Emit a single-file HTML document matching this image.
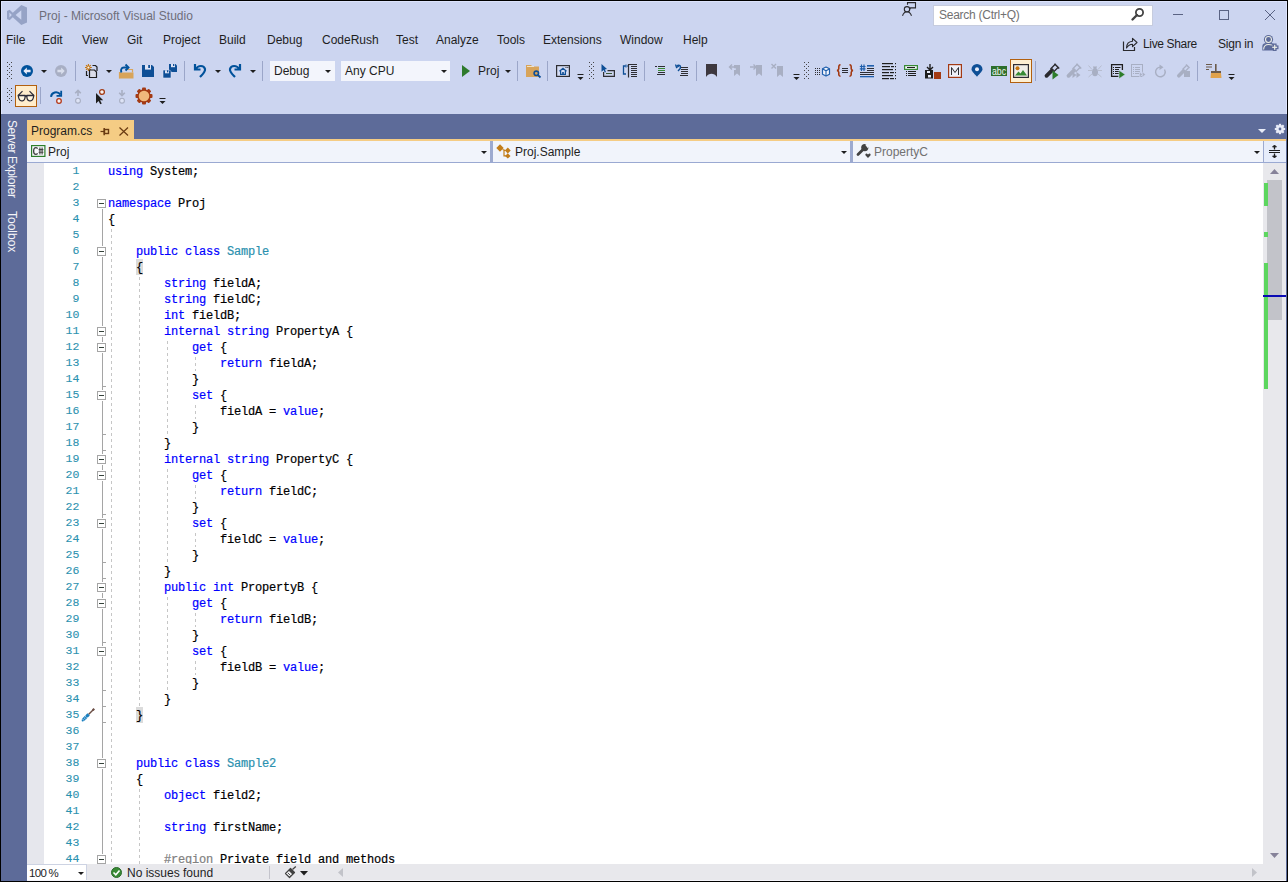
<!DOCTYPE html><html><head><meta charset="utf-8"><style>
*{margin:0;padding:0;box-sizing:border-box}
html,body{width:1288px;height:882px;overflow:hidden;background:#CCD5F0;font-family:"Liberation Sans",sans-serif;font-size:12px;color:#1E1E1E}
.a{position:absolute}
.t12{font-size:12px;line-height:14px;position:absolute;white-space:nowrap}
svg{position:absolute;overflow:visible}
.mono{font-family:"Liberation Mono",monospace;font-size:12px;letter-spacing:-0.2px;line-height:16px;-webkit-text-stroke:0.2px currentColor;white-space:pre;position:absolute}
.k{color:#0000FF}.ty{color:#2B91AF}.g{color:#808080}
</style></head><body>
<svg style="left:0px;top:0px" width="30" height="30" viewBox="0 0 30 30"><path d="M21.3 5 L27 7.6 V22.4 L21.3 25 L12.8 17.3 L9.6 20.3 L7 19 V11 L9.6 9.7 L12.8 12.7 Z M21.3 10.3 L15.6 15 L21.3 19.7 Z M9.4 12.6 V17.4 L11.8 15 Z" fill="#96A3C6" fill-rule="evenodd"/></svg>
<div class="t12" style="left:39px;top:9px;color:#6E6E7A;font-size:12px;">Proj - Microsoft Visual Studio</div>
<svg style="left:901px;top:1px" width="16" height="16" viewBox="0 0 16 16"><circle cx="6" cy="8.3" r="2.7" fill="none" stroke="#2A2A2E" stroke-width="1.1"/><path d="M1.5 14.7 C2.5 12 4 10.8 6 10.8 C8 10.8 9.5 12 10.5 14.7" fill="none" stroke="#2A2A2E" stroke-width="1.1"/><path d="M6.5 3.8 V1.6 H14.5 V6.9 H9.5 L8.5 8.5" fill="none" stroke="#2A2A2E" stroke-width="1.1"/></svg>
<div class="a" style="left:933px;top:5px;width:220px;height:21px;background:#FFFFFF;border:1px solid #C6CCDE"></div>
<div class="t12" style="left:939px;top:8px;color:#717171;font-size:12px;letter-spacing:-0.25px">Search (Ctrl+Q)</div>
<svg style="left:1131px;top:7px" width="14" height="14" viewBox="0 0 14 14"><circle cx="8.5" cy="5.5" r="3.6" fill="none" stroke="#424242" stroke-width="1.8"/><path d="M6 8 L1.5 12.5" stroke="#424242" stroke-width="2.4" stroke-linecap="round"/></svg>
<div class="a" style="left:1173px;top:14px;width:10px;height:1px;background:#5A6383;"></div>
<div class="a" style="left:1219px;top:10px;width:10px;height:10px;background:transparent;border:1px solid #5A6383"></div>
<svg style="left:1264px;top:9px" width="12" height="12" viewBox="0 0 12 12"><path d="M1 1 L11 11 M11 1 L1 11" stroke="#5A6383" stroke-width="1"/></svg>
<div class="t12" style="left:6px;top:33px;color:#1E1E1E;font-size:12px;">File</div>
<div class="t12" style="left:42px;top:33px;color:#1E1E1E;font-size:12px;">Edit</div>
<div class="t12" style="left:82px;top:33px;color:#1E1E1E;font-size:12px;">View</div>
<div class="t12" style="left:127px;top:33px;color:#1E1E1E;font-size:12px;">Git</div>
<div class="t12" style="left:163px;top:33px;color:#1E1E1E;font-size:12px;">Project</div>
<div class="t12" style="left:219px;top:33px;color:#1E1E1E;font-size:12px;">Build</div>
<div class="t12" style="left:267px;top:33px;color:#1E1E1E;font-size:12px;">Debug</div>
<div class="t12" style="left:322px;top:33px;color:#1E1E1E;font-size:12px;">CodeRush</div>
<div class="t12" style="left:396px;top:33px;color:#1E1E1E;font-size:12px;">Test</div>
<div class="t12" style="left:436px;top:33px;color:#1E1E1E;font-size:12px;">Analyze</div>
<div class="t12" style="left:497px;top:33px;color:#1E1E1E;font-size:12px;">Tools</div>
<div class="t12" style="left:543px;top:33px;color:#1E1E1E;font-size:12px;">Extensions</div>
<div class="t12" style="left:620px;top:33px;color:#1E1E1E;font-size:12px;">Window</div>
<div class="t12" style="left:683px;top:33px;color:#1E1E1E;font-size:12px;">Help</div>
<svg style="left:1120px;top:36px" width="20" height="17" viewBox="0 0 20 17"><path d="M3.5 5.5 V14.5 H14.5 V11" fill="none" stroke="#2A2A2E" stroke-width="1.2"/><path d="M6.5 12 C6.5 8 9 5.5 12.5 5.2 V2.3 L17 6.5 L12.5 10.7 V8.2 C10 8.2 8 9.5 6.5 12 Z" fill="none" stroke="#2A2A2E" stroke-width="1.1" stroke-linejoin="round"/></svg>
<div class="t12" style="left:1143px;top:37px;color:#1E1E1E;font-size:12px;letter-spacing:-0.35px">Live Share</div>
<div class="t12" style="left:1218px;top:37px;color:#1E1E1E;font-size:12px;letter-spacing:-0.2px">Sign in</div>
<svg style="left:1262px;top:34px" width="17" height="17" viewBox="0 0 17 17"><circle cx="6.5" cy="5.5" r="4.6" fill="#5D6B99"/><path d="M0.3 16.5 V12.5 C0.3 9.5 3 8.8 6.5 8.8 C10 8.8 12.7 9.5 12.7 12.5 V16.5 Z" fill="#5D6B99"/><circle cx="6.5" cy="5.5" r="3" fill="#5D6B99" stroke="#ECEEE6" stroke-width="1.1"/><path d="M1.6 15.5 C1.8 12 3.5 10.5 6.5 10.5 C9 10.5 10.5 11.5 11.2 12.8" fill="none" stroke="#ECEEE6" stroke-width="1.1"/><rect x="10.8" y="9.5" width="3.8" height="7.5" fill="#5D6B99"/><rect x="8.9" y="11.4" width="7.6" height="3.8" fill="#5D6B99"/><rect x="12.1" y="10.8" width="1.2" height="5" fill="#ECEEE6"/><rect x="10.2" y="12.7" width="5" height="1.2" fill="#ECEEE6"/></svg>
<svg style="left:7px;top:62px" width="6" height="18" viewBox="0 0 6 18"><g fill="#464646"><rect x="0" y="0" width="1" height="1"/><rect x="4" y="0" width="1" height="1"/><rect x="2" y="2" width="1" height="1"/><rect x="0" y="4" width="1" height="1"/><rect x="4" y="4" width="1" height="1"/><rect x="2" y="6" width="1" height="1"/><rect x="0" y="8" width="1" height="1"/><rect x="4" y="8" width="1" height="1"/><rect x="2" y="10" width="1" height="1"/><rect x="0" y="12" width="1" height="1"/><rect x="4" y="12" width="1" height="1"/><rect x="2" y="14" width="1" height="1"/><rect x="0" y="16" width="1" height="1"/><rect x="4" y="16" width="1" height="1"/></g></svg>
<svg style="left:21px;top:65px" width="12" height="12" viewBox="0 0 12 12"><circle cx="6" cy="6" r="6" fill="#00529B"/><path d="M2.3 6 L5.8 2.6 V4.8 H9.6 V7.2 H5.8 V9.4 Z" fill="#E8EBF8"/></svg>
<svg style="left:41px;top:70px" width="6" height="4" viewBox="0 0 6 4"><path d="M0 0 H6 L3 3 Z" fill="#1E1E1E"/></svg>
<svg style="left:55px;top:65px" width="12" height="12" viewBox="0 0 12 12"><circle cx="6" cy="6" r="6" fill="#A8AFC4"/><path d="M9.7 6 L6.2 2.6 V4.8 H2.4 V7.2 H6.2 V9.4 Z" fill="#D9DEEC"/></svg>
<div class="a" style="left:75px;top:61px;width:1px;height:20px;background:#9BA6C9;"></div>
<svg style="left:84px;top:63px" width="15" height="17" viewBox="0 0 15 17"><path d="M4.4 1 V8 M1 4.5 H7.8 M2 2.1 L6.8 6.9 M6.8 2.1 L2 6.9" stroke="#C6750E" stroke-width="1.1"/><circle cx="4.4" cy="4.5" r="1.5" fill="#F2F2F2" stroke="#C6750E" stroke-width="1"/><path d="M8.5 2.5 H11.5 L13 4 V8" fill="none" stroke="#1E1E1E" stroke-width="1.2"/><path d="M5.5 7 H10.5 L12.5 9 V14.5 H5.5 Z" fill="#DADCE8" stroke="#1E1E1E" stroke-width="1.2"/><path d="M2.5 8 V12.5 H4" fill="none" stroke="#1E1E1E" stroke-width="1.2"/></svg>
<svg style="left:106px;top:70px" width="6" height="4" viewBox="0 0 6 4"><path d="M0 0 H6 L3 3 Z" fill="#1E1E1E"/></svg>
<svg style="left:118px;top:63px" width="16" height="17" viewBox="0 0 16 17"><path d="M9 6.5 H14.5 V9.5" fill="none" stroke="#D9A55C" stroke-width="1.2"/><path d="M1.5 9.5 H15.5 V15.5 H1.5 Z" fill="#D8A45A"/><path d="M1.5 9 V15.5" stroke="#D8A45A" stroke-width="1.2"/><path d="M3.5 9.5 C2.5 7.5 3 4.5 6 4.5 H9" fill="none" stroke="#00529B" stroke-width="1.9"/><path d="M7.5 1.5 L10.5 4.5 L7.5 7.5" fill="none" stroke="#00529B" stroke-width="1.9"/></svg>
<svg style="left:142px;top:65px" width="12" height="12" viewBox="0 0 12 12"><path d="M0 0 H10 L12 2 V12 H0 Z" fill="#0E4F96"/><rect x="3" y="0" width="6" height="4.6" fill="#DDE3F5"/><rect x="6.2" y="0" width="1.8" height="3" fill="#0E4F96"/></svg>
<svg style="left:163px;top:64px" width="14" height="14" viewBox="0 0 14 14"><path d="M6 0 H12.5 L14 1.5 V8 H6 Z" fill="#0E4F96"/><rect x="8" y="0" width="4" height="3.2" fill="#DDE3F5"/><rect x="10" y="0" width="1.3" height="2" fill="#0E4F96"/><path d="M0 6 H6.5 L8 7.5 V14 H0 Z" fill="#0E4F96" stroke="#DDE3F5" stroke-width="0.6"/><rect x="2" y="6.3" width="4" height="3" fill="#DDE3F5"/><rect x="4" y="6.3" width="1.3" height="2" fill="#0E4F96"/></svg>
<div class="a" style="left:184px;top:61px;width:1px;height:20px;background:#9BA6C9;"></div>
<svg style="left:193px;top:62px" width="14" height="16" viewBox="0 0 14 16"><path d="M2 2 V7.5 H7.5" fill="none" stroke="#00529B" stroke-width="2.2"/><path d="M3 7 C5 3 11 3 12 7 C12.5 10 10 12 7 15" fill="none" stroke="#00529B" stroke-width="2.2"/></svg>
<svg style="left:215px;top:70px" width="6" height="4" viewBox="0 0 6 4"><path d="M0 0 H6 L3 3 Z" fill="#1E1E1E"/></svg>
<svg style="left:228px;top:62px" width="14" height="16" viewBox="0 0 14 16"><path d="M12 2 V7.5 H6.5" fill="none" stroke="#00529B" stroke-width="2.2"/><path d="M11 7 C9 3 3 3 2 7 C1.5 10 4 12 7 15" fill="none" stroke="#00529B" stroke-width="2.2"/></svg>
<svg style="left:250px;top:70px" width="6" height="4" viewBox="0 0 6 4"><path d="M0 0 H6 L3 3 Z" fill="#1E1E1E"/></svg>
<div class="a" style="left:262px;top:61px;width:1px;height:20px;background:#9BA6C9;"></div>
<div class="a" style="left:270px;top:61px;width:65px;height:20px;background:#F3F5FC;"></div>
<div class="t12" style="left:274px;top:64px;color:#1E1E1E;font-size:12px;">Debug</div>
<svg style="left:325px;top:70px" width="6" height="4" viewBox="0 0 6 4"><path d="M0 0 H6 L3 3 Z" fill="#1E1E1E"/></svg>
<div class="a" style="left:341px;top:61px;width:109px;height:20px;background:#F3F5FC;"></div>
<div class="t12" style="left:345px;top:64px;color:#1E1E1E;font-size:12px;">Any CPU</div>
<svg style="left:441px;top:70px" width="6" height="4" viewBox="0 0 6 4"><path d="M0 0 H6 L3 3 Z" fill="#1E1E1E"/></svg>
<svg style="left:462px;top:65px" width="9" height="12" viewBox="0 0 9 12"><path d="M0 0 L8 6 L0 12 Z" fill="#2E7A2C"/></svg>
<div class="t12" style="left:478px;top:64px;color:#1E1E1E;font-size:12px;">Proj</div>
<svg style="left:505px;top:70px" width="6" height="4" viewBox="0 0 6 4"><path d="M0 0 H6 L3 3 Z" fill="#1E1E1E"/></svg>
<div class="a" style="left:517px;top:61px;width:1px;height:20px;background:#9BA6C9;"></div>
<svg style="left:526px;top:65px" width="15" height="13" viewBox="0 0 15 13"><path d="M0 0 H5 L6.5 1.5 H13 V12 H0 Z" fill="#D8A45A"/><rect x="1" y="1" width="7" height="1" fill="#F0E2C8"/><circle cx="10.3" cy="8.3" r="2.2" fill="#D8A45A" stroke="#0E4F96" stroke-width="1.6"/><path d="M11.8 9.8 L14.5 12.5" stroke="#0E4F96" stroke-width="1.8"/></svg>
<div class="a" style="left:547px;top:61px;width:1px;height:20px;background:#9BA6C9;"></div>
<svg style="left:556px;top:65px" width="14" height="12" viewBox="0 0 14 12"><rect x="0.6" y="0.6" width="12.8" height="10.8" fill="#D4DCF4" stroke="#2E2E33" stroke-width="1.2"/><path d="M3.5 6.3 L7 3.2 L10.5 6.3 M4.6 5.6 V9.3 H9.4 V5.6" fill="none" stroke="#0E4F96" stroke-width="1.2"/><rect x="6.2" y="7" width="1.6" height="2.3" fill="#0E4F96"/><rect x="9.5" y="2" width="1" height="1" fill="#2E2E33"/><rect x="11.3" y="2" width="1" height="1" fill="#2E2E33"/></svg>
<svg style="left:577px;top:74px" width="7" height="7" viewBox="0 0 7 7"><rect x="0.5" y="0" width="6" height="1" fill="#1E1E1E"/><path d="M0.5 3 H6.5 L3.5 6 Z" fill="#1E1E1E"/></svg>
<svg style="left:589px;top:62px" width="6" height="18" viewBox="0 0 6 18"><g fill="#464646"><rect x="0" y="0" width="1" height="1"/><rect x="4" y="0" width="1" height="1"/><rect x="2" y="2" width="1" height="1"/><rect x="0" y="4" width="1" height="1"/><rect x="4" y="4" width="1" height="1"/><rect x="2" y="6" width="1" height="1"/><rect x="0" y="8" width="1" height="1"/><rect x="4" y="8" width="1" height="1"/><rect x="2" y="10" width="1" height="1"/><rect x="0" y="12" width="1" height="1"/><rect x="4" y="12" width="1" height="1"/><rect x="2" y="14" width="1" height="1"/><rect x="0" y="16" width="1" height="1"/><rect x="4" y="16" width="1" height="1"/></g></svg>
<svg style="left:601px;top:64px" width="15" height="14" viewBox="0 0 15 14"><path d="M0.5 0 L6 5 L3.8 5.4 L5 8 L3.8 8.6 L2.6 6 L0.5 7.8 Z" fill="#0E4F96"/><path d="M2.6 8 V12.4 H13.4 V6.6 H6.5" fill="none" stroke="#2E2E33" stroke-width="1.2"/><rect x="5" y="9" width="6" height="1" fill="#3B5A3B"/></svg>
<svg style="left:622px;top:63px" width="16" height="15" viewBox="0 0 16 15"><path d="M4 3 H1.5 V11 H4" fill="none" stroke="#0E4F96" stroke-width="1.3"/><path d="M4 1.5 L5.5 3 L4 4.5" fill="none" stroke="#0E4F96" stroke-width="1"/><path d="M6.5 1 V14.5" stroke="#2E2E33" stroke-width="1.2"/><g fill="#2E2E33"><rect x="6" y="1" width="9" height="1"/><rect x="9" y="3" width="6" height="1"/><rect x="9" y="5" width="6" height="1"/><rect x="9" y="7" width="6" height="1"/><rect x="9" y="9" width="6" height="1"/><rect x="9" y="11" width="6" height="1"/><rect x="9" y="13" width="6" height="1"/></g></svg>
<div class="a" style="left:644px;top:61px;width:1px;height:20px;background:#9BA6C9;"></div>
<svg style="left:654px;top:65px" width="12" height="11" viewBox="0 0 12 11"><g fill="#2E2E33"><rect x="1" y="1" width="2" height="1"/><rect x="4" y="1" width="7" height="1"/><rect x="4" y="7" width="7" height="1"/><rect x="3" y="9" width="8" height="1"/></g><g fill="#388A34"><rect x="4" y="3" width="7" height="1"/><rect x="4" y="5" width="7" height="1"/></g></svg>
<svg style="left:675px;top:64px" width="14" height="13" viewBox="0 0 14 13"><path d="M1.5 2.5 C2 1 5 0.5 5.5 2.5 C6 4.5 4 6 3 7" fill="none" stroke="#0E4F96" stroke-width="1.4"/><path d="M0.5 0.5 L1.5 3.5 L4 2" fill="none" stroke="#0E4F96" stroke-width="1.2"/><g fill="#2E2E33"><rect x="6" y="3" width="7" height="1"/><rect x="6" y="5" width="7" height="1"/><rect x="6" y="7" width="7" height="1"/><rect x="6" y="9" width="7" height="1"/><rect x="5" y="11" width="8" height="1"/></g></svg>
<div class="a" style="left:696px;top:61px;width:1px;height:20px;background:#9BA6C9;"></div>
<svg style="left:706px;top:64px" width="11" height="13" viewBox="0 0 11 13"><path d="M0 0 H11 V13 C9.5 10.5 7.5 9.8 5.5 9.8 C3.5 9.8 1.5 10.5 0 13 Z" fill="#3D383F"/></svg>
<svg style="left:728px;top:63px" width="13" height="14" viewBox="0 0 13 14"><path d="M6 2 H12 V13 L9 10.5 L6 13 Z" fill="#A8AFC3"/><path d="M1.5 4 H7 M4 1.5 L1.5 4 L4 6.5" fill="none" stroke="#A8AFC3" stroke-width="1.4"/><path d="M6 5.2 H7.8 V7 H6 Z" fill="#CCD5F0"/></svg>
<svg style="left:749px;top:63px" width="14" height="14" viewBox="0 0 14 14"><path d="M7 2 H13 V13 L10 10.5 L7 13 Z" fill="#A8AFC3"/><path d="M1 4 H7 M4.5 1.5 L7 4 L4.5 6.5" fill="none" stroke="#A8AFC3" stroke-width="1.4"/></svg>
<svg style="left:770px;top:63px" width="14" height="15" viewBox="0 0 14 15"><path d="M7 3 H13 V14 L10 11.5 L7 14 Z" fill="#A8AFC3"/><path d="M1.5 1 L6 5.5 M6 1 L1.5 5.5" stroke="#A8AFC3" stroke-width="1.4"/></svg>
<svg style="left:793px;top:74px" width="7" height="7" viewBox="0 0 7 7"><rect x="0.5" y="0" width="6" height="1" fill="#1E1E1E"/><path d="M0.5 3 H6.5 L3.5 6 Z" fill="#1E1E1E"/></svg>
<svg style="left:804px;top:62px" width="6" height="18" viewBox="0 0 6 18"><g fill="#464646"><rect x="0" y="0" width="1" height="1"/><rect x="4" y="0" width="1" height="1"/><rect x="2" y="2" width="1" height="1"/><rect x="0" y="4" width="1" height="1"/><rect x="4" y="4" width="1" height="1"/><rect x="2" y="6" width="1" height="1"/><rect x="0" y="8" width="1" height="1"/><rect x="4" y="8" width="1" height="1"/><rect x="2" y="10" width="1" height="1"/><rect x="0" y="12" width="1" height="1"/><rect x="4" y="12" width="1" height="1"/><rect x="2" y="14" width="1" height="1"/><rect x="0" y="16" width="1" height="1"/><rect x="4" y="16" width="1" height="1"/></g></svg>
<svg style="left:814px;top:66px" width="17" height="11" viewBox="0 0 17 11"><g fill="#2E2E33"><rect x="1" y="2" width="1" height="1"/><rect x="3" y="2" width="1" height="1"/><rect x="5" y="2" width="1" height="1"/><rect x="1" y="4" width="1" height="1"/><rect x="3" y="4" width="1" height="1"/><rect x="5" y="4" width="1" height="1"/><rect x="1" y="6" width="1" height="1"/><rect x="3" y="6" width="1" height="1"/><rect x="5" y="6" width="1" height="1"/><rect x="1" y="8" width="1" height="1"/><rect x="3" y="8" width="1" height="1"/><rect x="5" y="8" width="1" height="1"/></g><path d="M12 1 L15.5 2.8 V8.2 L12 10 L8.5 8.2 V2.8 Z" fill="#F4F6FC" stroke="#1F5FAD" stroke-width="1.2" stroke-linejoin="round"/><path d="M8.8 3 L12 4.8 L15.2 3 M12 4.8 V9.8" fill="none" stroke="#1F5FAD" stroke-width="1.1"/></svg>
<svg style="left:836px;top:64px" width="18" height="13" viewBox="0 0 18 13"><path d="M4.5 0.8 C2.5 0.8 2.8 2.5 2.8 4.5 C2.8 5.5 2.3 6.3 1 6.5 C2.3 6.7 2.8 7.5 2.8 8.5 C2.8 10.5 2.5 12.2 4.5 12.2 M13.5 0.8 C15.5 0.8 15.2 2.5 15.2 4.5 C15.2 5.5 15.7 6.3 17 6.5 C15.7 6.7 15.2 7.5 15.2 8.5 C15.2 10.5 15.5 12.2 13.5 12.2" fill="none" stroke="#A33A14" stroke-width="1.6"/><g fill="#2E2E33"><rect x="6" y="4" width="6" height="1"/><rect x="6" y="6" width="6" height="1"/><rect x="6" y="8" width="6" height="1"/></g></svg>
<svg style="left:859px;top:64px" width="15" height="14" viewBox="0 0 15 14"><path d="M2.5 0.5 V7 M5 0.5 V7 M0.8 2.5 H6.5 M0.8 4.8 H6.5" stroke="#1F5FAD" stroke-width="1.2"/><rect x="8" y="1" width="7" height="1.6" fill="#1F5FAD"/><rect x="8" y="4" width="7" height="1" fill="#2E2E33"/><rect x="8" y="6" width="7" height="1" fill="#2E2E33"/><rect x="1" y="8" width="14" height="1" fill="#2E2E33"/><rect x="1" y="10" width="14" height="1" fill="#2E2E33"/><rect x="1" y="12" width="14" height="1.3" fill="#1F5FAD"/></svg>
<svg style="left:881px;top:63px" width="16" height="17" viewBox="0 0 16 17"><g fill="#1E1E1E"><rect x="1" y="0" width="11" height="1.2"/><rect x="1" y="3" width="8" height="1.2"/><rect x="10" y="3" width="3" height="1.2"/><rect x="1" y="6" width="11" height="1.2"/><rect x="1" y="9" width="7" height="1.2"/><rect x="9" y="9" width="4" height="1.2"/><rect x="1" y="12" width="11" height="1.2"/><rect x="1" y="15" width="7" height="1.2"/><rect x="9" y="15" width="4" height="1.2"/><rect x="14" y="0" width="1" height="1.2"/><rect x="14" y="3" width="1" height="1.2"/><rect x="14" y="6" width="1" height="1.2"/><rect x="14" y="9" width="1" height="1.2"/><rect x="14" y="12" width="1" height="1.2"/><rect x="14" y="15" width="1" height="1.2"/></g></svg>
<svg style="left:904px;top:65px" width="14" height="12" viewBox="0 0 14 12"><rect x="0.6" y="0.6" width="12.8" height="3.8" fill="#F4F6FC" stroke="#388A34" stroke-width="1.2"/><rect x="3" y="2" width="8" height="1" fill="#1E1E1E"/><g fill="#1E1E1E"><rect x="2" y="6" width="1" height="1"/><rect x="4" y="6" width="8" height="1"/><rect x="2" y="8" width="1" height="1"/><rect x="4" y="8" width="8" height="1"/><rect x="2" y="10" width="1" height="1"/><rect x="4" y="10" width="8" height="1"/></g></svg>
<svg style="left:924px;top:64px" width="18" height="16" viewBox="0 0 18 16"><path d="M6 0 V5.5 M3 3 L6 6 L9 3" fill="none" stroke="#1E1E1E" stroke-width="1.4"/><rect x="1" y="6" width="8" height="8.5" fill="#1E1E1E"/><rect x="3" y="7" width="3" height="2" fill="#E8ECF8"/><rect x="4" y="11" width="3" height="2.5" fill="#E8ECF8"/><rect x="10" y="8" width="7" height="7" fill="#A33A14"/></svg>
<svg style="left:948px;top:64px" width="14" height="14" viewBox="0 0 14 14"><rect x="0.6" y="0.6" width="12.8" height="12.8" fill="#EEF0F8" stroke="#A33A14" stroke-width="1.2"/><path d="M3.5 11 V3.5 L7 8.5 L10.5 3.5 V11" fill="none" stroke="#2E2E33" stroke-width="1"/></svg>
<svg style="left:971px;top:64px" width="12" height="13" viewBox="0 0 12 13"><path d="M6 12.8 C2.5 8.8 0.5 7 0.5 5.3 A5.5 5.3 0 0 1 11.5 5.3 C11.5 7 9.5 8.8 6 12.8 Z" fill="#0E4F96"/><circle cx="6" cy="5.2" r="2" fill="#E8EBF8"/></svg>
<div class="a" style="left:991px;top:66px;width:16px;height:10px;background:#2D6E2B;"></div>
<svg style="left:991px;top:66px" width="16" height="10" viewBox="0 0 16 10"><text x="1" y="8.5" font-family="Liberation Sans" font-size="10.5" fill="#F2F6F2" textLength="14" lengthAdjust="spacingAndGlyphs">abc</text></svg>
<div class="a" style="left:1010px;top:59px;width:22px;height:24px;background:#FDEFD2;border:1px solid #B2600F"></div>
<svg style="left:1013px;top:64px" width="16" height="14" viewBox="0 0 16 14"><rect x="0.6" y="0.6" width="14.8" height="12.8" fill="#F0EEE8" stroke="#2E2E33" stroke-width="1.2"/><circle cx="4.5" cy="4.2" r="2" fill="#C6750E"/><path d="M2 11.5 L5.5 7.5 L7.5 9.5 L10 6 L14 11.5 Z" fill="#388A34"/></svg>
<div class="a" style="left:1035px;top:61px;width:1px;height:20px;background:#9BA6C9;"></div>
<svg style="left:1044px;top:63px" width="17" height="17" viewBox="0 0 17 17"><path d="M2.5 12.8 L8 7.3" stroke="#2A2A2E" stroke-width="3.8" stroke-linecap="round"/><path d="M6.5 6 L11.5 1 M9.5 9 L14 4.5" stroke="#2A2A2E" stroke-width="1.3"/><path d="M10.5 0.8 L15.2 5.5" stroke="#2A2A2E" stroke-width="1.5"/><path d="M8.5 7.5 L14.5 12 L8.5 16.5 Z" fill="#2D7D2A"/></svg>
<svg style="left:1066px;top:63px" width="17" height="17" viewBox="0 0 17 17"><path d="M2.5 12.8 L8 7.3" stroke="#A8AFC3" stroke-width="3.8" stroke-linecap="round"/><path d="M6.5 6 L11.5 1 M9.5 9 L14 4.5" stroke="#A8AFC3" stroke-width="1.3"/><path d="M10.5 0.8 L15.2 5.5" stroke="#A8AFC3" stroke-width="1.5"/><path d="M6.5 9 L10.5 12 L6.5 15 Z M10.5 9 L14.5 12 L10.5 15 Z" fill="#A8AFC3"/></svg>
<svg style="left:1088px;top:65px" width="14" height="13" viewBox="0 0 14 13"><ellipse cx="7" cy="7.3" rx="3" ry="4" fill="#A8AFC3"/><ellipse cx="7" cy="2.8" rx="1.8" ry="1.2" fill="#A8AFC3"/><path d="M5.5 1 L6 2 M8.5 1 L8 2 M0.5 0.5 L4 4.5 M13.5 0.5 L10 4.5 M0 5.5 H4 M14 5.5 H10 M0.5 12 L4 9 M13.5 12 L10 9" stroke="#B4BACB" stroke-width="0.9"/></svg>
<svg style="left:1110px;top:63px" width="16" height="17" viewBox="0 0 16 17"><path d="M8.5 13.4 H1.6 V1.6 H12.4 V7" fill="none" stroke="#1E1E1E" stroke-width="1.3"/><g fill="#1E1E1E"><rect x="3" y="4" width="1" height="1"/><rect x="5" y="4" width="5.5" height="1"/><rect x="3" y="6" width="1" height="1"/><rect x="5" y="6" width="4" height="1"/><rect x="3" y="8" width="1" height="1"/><rect x="5" y="8" width="4" height="1"/><rect x="3" y="10" width="1" height="1"/><rect x="5" y="10" width="4" height="1"/></g><path d="M9 7.2 L15.2 11.5 L9 15.8 Z" fill="#2D7D2A" stroke="#CCD5F0" stroke-width="0.6"/></svg>
<svg style="left:1131px;top:64px" width="15" height="13" viewBox="0 0 15 13"><rect x="0.5" y="0.5" width="11" height="12" fill="none" stroke="#A8AFC3" stroke-width="1"/><g fill="#A8AFC3"><rect x="2" y="3" width="1" height="1"/><rect x="4" y="3" width="5" height="1"/><rect x="2" y="5" width="1" height="1"/><rect x="4" y="5" width="5" height="1"/><rect x="2" y="7" width="1" height="1"/><rect x="4" y="7" width="5" height="1"/><rect x="2" y="9" width="1" height="1"/><rect x="4" y="9" width="4" height="1"/></g><path d="M8.5 8 L11.5 10.5 L8.5 13 Z M11.5 8 L14.5 10.5 L11.5 13 Z" fill="#A8AFC3" stroke="#CCD5F0" stroke-width="0.5"/></svg>
<svg style="left:1155px;top:64px" width="12" height="14" viewBox="0 0 12 14"><path d="M9.5 5.5 A4.8 4.8 0 1 1 6 3.2" fill="none" stroke="#A8AFC3" stroke-width="1.4"/><path d="M4.5 0.5 L8.5 3.2 L4.5 6 Z" fill="#A8AFC3"/></svg>
<svg style="left:1177px;top:63px" width="14" height="15" viewBox="0 0 14 15"><path d="M1.8 12.8 L6.5 8" stroke="#A8AFC3" stroke-width="3.6" stroke-linecap="round"/><path d="M5.5 6.5 L9.5 2.5 M7.5 9 L11.5 5" stroke="#A8AFC3" stroke-width="1.2"/><path d="M9 1.5 L12.5 5" stroke="#A8AFC3" stroke-width="1.4"/><rect x="7" y="8" width="6" height="6" fill="#A8AFC3"/></svg>
<div class="a" style="left:1197px;top:61px;width:1px;height:20px;background:#9BA6C9;"></div>
<svg style="left:1206px;top:64px" width="16" height="15" viewBox="0 0 16 15"><g fill="#6B5A4A"><rect x="0" y="0" width="6" height="1"/><rect x="0" y="2.5" width="6" height="1"/><rect x="0" y="5" width="3" height="1"/><rect x="9" y="0" width="1.6" height="7"/><rect x="5" y="7" width="10" height="2"/></g><path d="M5 9 H15 L15.5 14 H4.5 Z" fill="#E0A24C"/></svg>
<svg style="left:1228px;top:74px" width="7" height="7" viewBox="0 0 7 7"><rect x="0.5" y="0" width="6" height="1" fill="#1E1E1E"/><path d="M0.5 3 H6.5 L3.5 6 Z" fill="#1E1E1E"/></svg>
<svg style="left:7px;top:88px" width="6" height="16" viewBox="0 0 6 16"><g fill="#464646"><rect x="0" y="0" width="1" height="1"/><rect x="4" y="0" width="1" height="1"/><rect x="2" y="2" width="1" height="1"/><rect x="0" y="4" width="1" height="1"/><rect x="4" y="4" width="1" height="1"/><rect x="2" y="6" width="1" height="1"/><rect x="0" y="8" width="1" height="1"/><rect x="4" y="8" width="1" height="1"/><rect x="2" y="10" width="1" height="1"/><rect x="0" y="12" width="1" height="1"/><rect x="4" y="12" width="1" height="1"/><rect x="2" y="14" width="1" height="1"/></g></svg>
<div class="a" style="left:15px;top:85px;width:22px;height:22px;background:#FFEDCC;border:1px solid #B2600F"></div>
<svg style="left:17px;top:90px" width="19" height="13" viewBox="0 0 19 13"><path d="M5.5 1.2 L1.2 5.5 M12.5 1.2 L16.8 5.5" stroke="#2B2B38" stroke-width="1.2"/><path d="M1.2 5.5 H8.2 C8.2 9 7 10.8 5.5 10.8 H4.5 C2.8 10.8 1.6 8.5 1.2 5.5 Z M9.8 5.5 H16.8 C16.4 8.5 15.2 10.8 13.5 10.8 H12.5 C11 10.8 9.8 9 9.8 5.5 Z" fill="#FFF6E0" stroke="#2B2B38" stroke-width="1.3" stroke-linejoin="round"/><path d="M8 6 H10" stroke="#2B2B38" stroke-width="1.6"/></svg>
<div class="a" style="left:40px;top:87px;width:1px;height:17px;background:#9BA6C9;"></div>
<svg style="left:49px;top:90px" width="15" height="15" viewBox="0 0 15 15"><path d="M2 6.8 C2.5 2.5 8 0.5 11.5 4.5" fill="none" stroke="#00529B" stroke-width="2"/><path d="M12.2 0.8 V5.8 H7.5" fill="none" stroke="#00529B" stroke-width="1.8"/><circle cx="10" cy="11" r="2.3" fill="#F4F4F4" stroke="#B5391A" stroke-width="1.3"/></svg>
<svg style="left:74px;top:89px" width="8" height="15" viewBox="0 0 8 15"><path d="M4 1.5 V7 M1.2 4.2 L4 1.4 L6.8 4.2" fill="none" stroke="#A8AFC3" stroke-width="1.6"/><circle cx="4" cy="11.7" r="2.4" fill="#DDE3F5" stroke="#A8AFC3" stroke-width="1.1"/></svg>
<svg style="left:95px;top:89px" width="11" height="16" viewBox="0 0 11 16"><path d="M1 4 V14.5 L3.5 12 L5.3 15.3 L6.8 14.5 L5 11.3 H8.2 Z" fill="#1E1E1E"/><circle cx="7" cy="3" r="2.4" fill="#F4F4F4" stroke="#A33A14" stroke-width="1.3"/></svg>
<svg style="left:118px;top:89px" width="8" height="15" viewBox="0 0 8 15"><path d="M4 1 V6.5 M1.2 3.8 L4 6.6 L6.8 3.8" fill="none" stroke="#A8AFC3" stroke-width="1.6"/><circle cx="4" cy="11.7" r="2.4" fill="#DDE3F5" stroke="#A8AFC3" stroke-width="1.1"/></svg>
<svg style="left:135px;top:87px" width="18" height="18" viewBox="0 0 18 18"><g fill="#A33A14" transform="translate(9 9)"><rect x="-2" y="-8.5" width="4" height="4" rx="1"/><rect x="-2" y="-8.5" width="4" height="4" rx="1" transform="rotate(45)"/><rect x="-2" y="-8.5" width="4" height="4" rx="1" transform="rotate(90)"/><rect x="-2" y="-8.5" width="4" height="4" rx="1" transform="rotate(135)"/><rect x="-2" y="-8.5" width="4" height="4" rx="1" transform="rotate(180)"/><rect x="-2" y="-8.5" width="4" height="4" rx="1" transform="rotate(225)"/><rect x="-2" y="-8.5" width="4" height="4" rx="1" transform="rotate(270)"/><rect x="-2" y="-8.5" width="4" height="4" rx="1" transform="rotate(315)"/></g><circle cx="9" cy="9" r="6" fill="#F0B87C" stroke="#A33A14" stroke-width="1.4"/></svg>
<svg style="left:159px;top:98px" width="7" height="7" viewBox="0 0 7 7"><rect x="0.5" y="0" width="6" height="1" fill="#1E1E1E"/><path d="M0.5 3 H6.5 L3.5 6 Z" fill="#1E1E1E"/></svg>
<div class="a" style="left:1px;top:114px;width:1286px;height:27px;background:#5D6B99;"></div>
<div class="a" style="left:1px;top:114px;width:26px;height:768px;background:#5D6B99;"></div>
<div class="t12" style="left:5px;top:120px;color:#F4F4F8;writing-mode:vertical-rl;font-size:12px;line-height:14px;letter-spacing:-0.38px">Server Explorer</div>
<div class="t12" style="left:5px;top:211px;color:#F4F4F8;writing-mode:vertical-rl;font-size:12px;line-height:14px">Toolbox</div>
<div class="a" style="left:27px;top:120px;width:107px;height:21px;background:#F5CC84;"></div>
<div class="a" style="left:27px;top:139px;width:1260px;height:2px;background:#F5CC84;"></div>
<div class="t12" style="left:31px;top:124px;color:#1E1E1E;font-size:12px;">Program.cs</div>
<svg style="left:100px;top:127px" width="10" height="9" viewBox="0 0 10 9"><path d="M0.5 4.5 H4" stroke="#6A3B12" stroke-width="1.2"/><path d="M4.2 1 V8.2" stroke="#6A3B12" stroke-width="1.5"/><rect x="4.5" y="2.5" width="4" height="4" fill="none" stroke="#6A3B12" stroke-width="1.4"/></svg>
<svg style="left:119px;top:127px" width="10" height="9" viewBox="0 0 10 9"><path d="M0.5 0.5 L9 8.5 M9 0.5 L0.5 8.5" stroke="#6A3B12" stroke-width="1.2"/></svg>
<svg style="left:1258px;top:129px" width="8" height="4" viewBox="0 0 8 4"><path d="M0 0 H8 L4 4 Z" fill="#E8ECF8"/></svg>
<svg style="left:1274px;top:123px" width="12" height="12" viewBox="0 0 12 12"><g fill="#E8ECF8" transform="translate(6 6)"><rect x="-1.1" y="-5.2" width="2.2" height="10.4"/><rect x="-1.1" y="-5.2" width="2.2" height="10.4" transform="rotate(45)"/><rect x="-1.1" y="-5.2" width="2.2" height="10.4" transform="rotate(90)"/><rect x="-1.1" y="-5.2" width="2.2" height="10.4" transform="rotate(135)"/></g><circle cx="6" cy="6" r="2.7" fill="none" stroke="#E8ECF8" stroke-width="2.4"/><circle cx="6" cy="6" r="1.4" fill="#5D6B99"/></svg>
<div class="a" style="left:27px;top:141px;width:1260px;height:21px;background:#F1F4FB;"></div>
<div class="a" style="left:27px;top:162px;width:1260px;height:1px;background:#9AA9D2;"></div>
<div class="a" style="left:490px;top:141px;width:3px;height:21px;background:#9DAACF;"></div>
<div class="a" style="left:850px;top:141px;width:3px;height:21px;background:#9DAACF;"></div>
<div class="a" style="left:1263px;top:141px;width:1px;height:21px;background:#9DAACF;"></div>
<div class="a" style="left:1264px;top:141px;width:23px;height:21px;background:#E6ECFA;"></div>
<svg style="left:31px;top:145px" width="15" height="12" viewBox="0 0 15 12"><rect x="0.6" y="0.6" width="13.3" height="10.8" fill="#F8F9FD" stroke="#2D7D2A" stroke-width="1.2"/><path d="M6.6 3.6 C6.2 3 5.6 2.7 4.8 2.7 C3.4 2.7 2.6 4 2.6 6 C2.6 8 3.4 9.3 4.8 9.3 C5.6 9.3 6.2 9 6.6 8.4" fill="none" stroke="#424242" stroke-width="1.3"/><path d="M8.9 2.5 V9.5 M11.1 2.5 V9.5 M7.6 4.6 H12.4 M7.6 7.2 H12.4" stroke="#424242" stroke-width="1.1"/></svg>
<div class="t12" style="left:48px;top:145px;color:#1E1E1E;font-size:12px;">Proj</div>
<svg style="left:481px;top:151px" width="6" height="4" viewBox="0 0 6 4"><path d="M0 0 H6 L3 3 Z" fill="#1E1E1E"/></svg>
<svg style="left:496px;top:143px" width="16" height="16" viewBox="0 0 16 16"><path d="M4 1.3 L7.7 5 L4 8.7 L0.3 5 Z M11.8 4.6 L14.7 7.5 L11.8 10.4 L8.9 7.5 Z M11.8 10.2 L14.5 12.9 L11.8 15.6 L9.1 12.9 Z" fill="#C27D1A"/><path d="M6.5 6.5 L9.5 7.5 M8 7 V12.9 H10" fill="none" stroke="#C27D1A" stroke-width="1.2"/></svg>
<div class="t12" style="left:515px;top:145px;color:#1E1E1E;font-size:12px;">Proj.Sample</div>
<svg style="left:841px;top:151px" width="6" height="4" viewBox="0 0 6 4"><path d="M0 0 H6 L3 3 Z" fill="#1E1E1E"/></svg>
<svg style="left:856px;top:143px" width="16" height="16" viewBox="0 0 16 16"><path d="M2 11.5 L6.8 6.7" stroke="#424242" stroke-width="2.8" stroke-linecap="round"/><circle cx="8.8" cy="4.6" r="3.6" fill="#424242"/><path d="M9.2 1.8 L12.8 -0.2 L14.5 1.5 L11.8 5.2 Z" fill="#F1F4FB"/><path d="M12 15 L9.6 12.4 C9 11.5 9.7 10.4 10.8 10.6 L12 11.6 L13.2 10.6 C14.3 10.4 15 11.5 14.4 12.4 Z" fill="#424242"/></svg>
<div class="t12" style="left:874px;top:145px;color:#717171;font-size:12px;">PropertyC</div>
<svg style="left:1254px;top:151px" width="6" height="4" viewBox="0 0 6 4"><path d="M0 0 H6 L3 3 Z" fill="#1E1E1E"/></svg>
<svg style="left:1268px;top:144px" width="14" height="15" viewBox="0 0 14 15"><path d="M1 6.5 H12 M1 8.5 H12" stroke="#1E1E1E" stroke-width="1.1"/><path d="M6.5 2 V5.5 M6.5 9.5 V13" stroke="#1E1E1E" stroke-width="1.3"/><path d="M4.5 3 L6.5 1 L8.5 3 Z M4.5 12 L6.5 14 L8.5 12 Z" fill="#1E1E1E" stroke="#1E1E1E" stroke-width="0.8"/></svg>
<div class="a" style="left:27px;top:163px;width:1236px;height:701px;background:#FFFFFF;"></div>
<div class="a" style="left:27px;top:163px;width:17px;height:701px;background:#E6E7ED;"></div>
<div class="a" style="left:0;top:0;width:1263px;height:864px;overflow:hidden">
<div class="a" style="left:136px;top:259px;width:7px;height:16px;background:#DBDBDB;"></div>
<div class="a" style="left:136px;top:707px;width:7px;height:16px;background:#DBDBDB;"></div>
<div class="a" style="left:111px;top:227px;width:1px;height:640px;background:repeating-linear-gradient(to bottom,transparent 0,transparent 2px,#C6C6C6 2px,#C6C6C6 5px,transparent 5px,transparent 6px)"></div>
<div class="a" style="left:139px;top:275px;width:1px;height:432px;background:repeating-linear-gradient(to bottom,transparent 0,transparent 2px,#C6C6C6 2px,#C6C6C6 5px,transparent 5px,transparent 6px)"></div>
<div class="a" style="left:139px;top:787px;width:1px;height:80px;background:repeating-linear-gradient(to bottom,transparent 0,transparent 2px,#C6C6C6 2px,#C6C6C6 5px,transparent 5px,transparent 6px)"></div>
<div class="a" style="left:167px;top:339px;width:1px;height:96px;background:repeating-linear-gradient(to bottom,transparent 0,transparent 2px,#C6C6C6 2px,#C6C6C6 5px,transparent 5px,transparent 6px)"></div>
<div class="a" style="left:167px;top:467px;width:1px;height:96px;background:repeating-linear-gradient(to bottom,transparent 0,transparent 2px,#C6C6C6 2px,#C6C6C6 5px,transparent 5px,transparent 6px)"></div>
<div class="a" style="left:167px;top:595px;width:1px;height:96px;background:repeating-linear-gradient(to bottom,transparent 0,transparent 2px,#C6C6C6 2px,#C6C6C6 5px,transparent 5px,transparent 6px)"></div>
<div class="a" style="left:195px;top:355px;width:1px;height:16px;background:repeating-linear-gradient(to bottom,transparent 0,transparent 2px,#C6C6C6 2px,#C6C6C6 5px,transparent 5px,transparent 6px)"></div>
<div class="a" style="left:195px;top:403px;width:1px;height:16px;background:repeating-linear-gradient(to bottom,transparent 0,transparent 2px,#C6C6C6 2px,#C6C6C6 5px,transparent 5px,transparent 6px)"></div>
<div class="a" style="left:195px;top:483px;width:1px;height:16px;background:repeating-linear-gradient(to bottom,transparent 0,transparent 2px,#C6C6C6 2px,#C6C6C6 5px,transparent 5px,transparent 6px)"></div>
<div class="a" style="left:195px;top:531px;width:1px;height:16px;background:repeating-linear-gradient(to bottom,transparent 0,transparent 2px,#C6C6C6 2px,#C6C6C6 5px,transparent 5px,transparent 6px)"></div>
<div class="a" style="left:195px;top:611px;width:1px;height:16px;background:repeating-linear-gradient(to bottom,transparent 0,transparent 2px,#C6C6C6 2px,#C6C6C6 5px,transparent 5px,transparent 6px)"></div>
<div class="a" style="left:195px;top:659px;width:1px;height:16px;background:repeating-linear-gradient(to bottom,transparent 0,transparent 2px,#C6C6C6 2px,#C6C6C6 5px,transparent 5px,transparent 6px)"></div>
<div class="a" style="left:102px;top:208px;width:1px;height:657px;background:#A5A5A5;"></div>
<div class="a" style="left:103px;top:386px;width:3px;height:1px;background:#A5A5A5;"></div>
<div class="a" style="left:103px;top:434px;width:3px;height:1px;background:#A5A5A5;"></div>
<div class="a" style="left:103px;top:450px;width:3px;height:1px;background:#A5A5A5;"></div>
<div class="a" style="left:103px;top:514px;width:3px;height:1px;background:#A5A5A5;"></div>
<div class="a" style="left:103px;top:562px;width:3px;height:1px;background:#A5A5A5;"></div>
<div class="a" style="left:103px;top:578px;width:3px;height:1px;background:#A5A5A5;"></div>
<div class="a" style="left:103px;top:642px;width:3px;height:1px;background:#A5A5A5;"></div>
<div class="a" style="left:103px;top:690px;width:3px;height:1px;background:#A5A5A5;"></div>
<div class="a" style="left:103px;top:706px;width:3px;height:1px;background:#A5A5A5;"></div>
<div class="a" style="left:103px;top:722px;width:3px;height:1px;background:#A5A5A5;"></div>
<div class="a" style="left:97px;top:198px;width:9px;height:11px;background:#FFFFFF;"></div>
<div class="a" style="left:97px;top:199px;width:9px;height:9px;background:#fff;border:1px solid #A5A5A5"></div>
<div class="a" style="left:99px;top:203px;width:5px;height:1px;background:#34423A;"></div>
<div class="a" style="left:97px;top:246px;width:9px;height:11px;background:#FFFFFF;"></div>
<div class="a" style="left:97px;top:247px;width:9px;height:9px;background:#fff;border:1px solid #A5A5A5"></div>
<div class="a" style="left:99px;top:251px;width:5px;height:1px;background:#34423A;"></div>
<div class="a" style="left:97px;top:326px;width:9px;height:11px;background:#FFFFFF;"></div>
<div class="a" style="left:97px;top:327px;width:9px;height:9px;background:#fff;border:1px solid #A5A5A5"></div>
<div class="a" style="left:99px;top:331px;width:5px;height:1px;background:#34423A;"></div>
<div class="a" style="left:97px;top:342px;width:9px;height:11px;background:#FFFFFF;"></div>
<div class="a" style="left:97px;top:343px;width:9px;height:9px;background:#fff;border:1px solid #A5A5A5"></div>
<div class="a" style="left:99px;top:347px;width:5px;height:1px;background:#34423A;"></div>
<div class="a" style="left:97px;top:390px;width:9px;height:11px;background:#FFFFFF;"></div>
<div class="a" style="left:97px;top:391px;width:9px;height:9px;background:#fff;border:1px solid #A5A5A5"></div>
<div class="a" style="left:99px;top:395px;width:5px;height:1px;background:#34423A;"></div>
<div class="a" style="left:97px;top:454px;width:9px;height:11px;background:#FFFFFF;"></div>
<div class="a" style="left:97px;top:455px;width:9px;height:9px;background:#fff;border:1px solid #A5A5A5"></div>
<div class="a" style="left:99px;top:459px;width:5px;height:1px;background:#34423A;"></div>
<div class="a" style="left:97px;top:470px;width:9px;height:11px;background:#FFFFFF;"></div>
<div class="a" style="left:97px;top:471px;width:9px;height:9px;background:#fff;border:1px solid #A5A5A5"></div>
<div class="a" style="left:99px;top:475px;width:5px;height:1px;background:#34423A;"></div>
<div class="a" style="left:97px;top:518px;width:9px;height:11px;background:#FFFFFF;"></div>
<div class="a" style="left:97px;top:519px;width:9px;height:9px;background:#fff;border:1px solid #A5A5A5"></div>
<div class="a" style="left:99px;top:523px;width:5px;height:1px;background:#34423A;"></div>
<div class="a" style="left:97px;top:582px;width:9px;height:11px;background:#FFFFFF;"></div>
<div class="a" style="left:97px;top:583px;width:9px;height:9px;background:#fff;border:1px solid #A5A5A5"></div>
<div class="a" style="left:99px;top:587px;width:5px;height:1px;background:#34423A;"></div>
<div class="a" style="left:97px;top:598px;width:9px;height:11px;background:#FFFFFF;"></div>
<div class="a" style="left:97px;top:599px;width:9px;height:9px;background:#fff;border:1px solid #A5A5A5"></div>
<div class="a" style="left:99px;top:603px;width:5px;height:1px;background:#34423A;"></div>
<div class="a" style="left:97px;top:646px;width:9px;height:11px;background:#FFFFFF;"></div>
<div class="a" style="left:97px;top:647px;width:9px;height:9px;background:#fff;border:1px solid #A5A5A5"></div>
<div class="a" style="left:99px;top:651px;width:5px;height:1px;background:#34423A;"></div>
<div class="a" style="left:97px;top:758px;width:9px;height:11px;background:#FFFFFF;"></div>
<div class="a" style="left:97px;top:759px;width:9px;height:9px;background:#fff;border:1px solid #A5A5A5"></div>
<div class="a" style="left:99px;top:763px;width:5px;height:1px;background:#34423A;"></div>
<div class="a" style="left:97px;top:854px;width:9px;height:11px;background:#FFFFFF;"></div>
<div class="a" style="left:97px;top:855px;width:9px;height:9px;background:#fff;border:1px solid #A5A5A5"></div>
<div class="a" style="left:99px;top:859px;width:5px;height:1px;background:#34423A;"></div>
<div class="mono" style="left:108px;top:164px;color:#000"><span class="k">using</span> System;

<span class="k">namespace</span> Proj
{

    <span class="k">public</span> <span class="k">class</span> <span class="ty">Sample</span>
    {
        <span class="k">string</span> fieldA;
        <span class="k">string</span> fieldC;
        <span class="k">int</span> fieldB;
        <span class="k">internal</span> <span class="k">string</span> PropertyA {
            <span class="k">get</span> {
                <span class="k">return</span> fieldA;
            }
            <span class="k">set</span> {
                fieldA = <span class="k">value</span>;
            }
        }
        <span class="k">internal</span> <span class="k">string</span> PropertyC {
            <span class="k">get</span> {
                <span class="k">return</span> fieldC;
            }
            <span class="k">set</span> {
                fieldC = <span class="k">value</span>;
            }
        }
        <span class="k">public</span> <span class="k">int</span> PropertyB {
            <span class="k">get</span> {
                <span class="k">return</span> fieldB;
            }
            <span class="k">set</span> {
                fieldB = <span class="k">value</span>;
            }
        }
    }


    <span class="k">public</span> <span class="k">class</span> <span class="ty">Sample2</span>
    {
        <span class="k">object</span> field2;

        <span class="k">string</span> firstName;

        <span class="g">#region</span> Private field and methods</div>
<div class="mono" style="left:44px;top:163px;width:35.5px;text-align:right;color:#2B91AF;-webkit-text-stroke:0.1px #2B91AF;font-size:11.5px;letter-spacing:0.1px">1
2
3
4
5
6
7
8
9
10
11
12
13
14
15
16
17
18
19
20
21
22
23
24
25
26
27
28
29
30
31
32
33
34
35
36
37
38
39
40
41
42
43
44</div>
<svg style="left:80px;top:707px" width="16" height="16" viewBox="0 0 16 16"><path d="M8.5 7.5 L13.5 2.5" stroke="#6B4E45" stroke-width="1.4"/><path d="M12 2.5 L13.5 1 L15 2.5 L13.5 4 Z" fill="#6B4E45"/><path d="M9.8 8.5 L7.5 6.2 L3 10.7 C1.2 12.5 1.5 14.5 2.5 14.5 C3.5 14.5 4.8 13.5 5.3 13 Z" fill="#1A7FBF"/><g fill="#D8ECF8"><rect x="5" y="8.6" width="1" height="1"/><rect x="6.6" y="10" width="1" height="1"/><rect x="4.2" y="10.6" width="1" height="1"/><rect x="5.6" y="11.8" width="1" height="1"/></g><path d="M2.5 12 L4.2 13.7" stroke="#D8ECF8" stroke-width="0.8"/></svg>
</div>
<div class="a" style="left:1263px;top:163px;width:23px;height:701px;background:#E8E8EC;"></div>
<svg style="left:1270px;top:169px" width="9" height="5" viewBox="0 0 9 5"><path d="M0 5 L4.5 0 L9 5 Z" fill="#868299"/></svg>
<div class="a" style="left:1267px;top:180px;width:15px;height:140px;background:#C2C3C9;"></div>
<div class="a" style="left:1264px;top:183px;width:4px;height:23px;background:#5DD65F;"></div>
<div class="a" style="left:1264px;top:232px;width:4px;height:5px;background:#5DD65F;"></div>
<div class="a" style="left:1264px;top:263px;width:4px;height:126px;background:#5DD65F;"></div>
<div class="a" style="left:1263px;top:295px;width:23px;height:2px;background:#0A0AB4;"></div>
<svg style="left:1270px;top:853px" width="9" height="5" viewBox="0 0 9 5"><path d="M0 0 L9 0 L4.5 5 Z" fill="#868299"/></svg>
<div class="a" style="left:27px;top:864px;width:1259px;height:17px;background:#E8E8EC;"></div>
<div class="a" style="left:27px;top:864px;width:60px;height:17px;background:#FFFFFF;border-top:1px solid #CDD3E3;border-right:1px solid #CDD3E3"></div>
<div class="t12" style="left:29px;top:866px;color:#1E1E1E;font-size:11.5px;letter-spacing:-0.7px">100 %</div>
<svg style="left:78px;top:872px" width="6" height="4" viewBox="0 0 6 4"><path d="M0 0 H6 L3 3 Z" fill="#1E1E1E"/></svg>
<svg style="left:111px;top:867px" width="11" height="11" viewBox="0 0 11 11"><circle cx="5.5" cy="5.5" r="5" fill="#388A34" stroke="#2B6A2A" stroke-width="1"/><path d="M2.5 5.5 L4.8 7.8 L8.5 3.5" fill="none" stroke="#FFFFFF" stroke-width="1.6"/></svg>
<div class="t12" style="left:127px;top:866px;color:#1E1E1E;font-size:12px;">No issues found</div>
<div class="a" style="left:269px;top:866px;width:1px;height:13px;background:#C4C4CC;"></div>
<svg style="left:284px;top:866px" width="13" height="13" viewBox="0 0 13 13"><path d="M8.5 3.5 L11.8 0.5" stroke="#424242" stroke-width="1.3"/><path d="M6.5 2.5 L10.5 6.5 L5.5 11.5 L1.5 7.5 Z" fill="#F2F2F4" stroke="#424242" stroke-width="1.2" stroke-linejoin="round"/><path d="M6.5 2.5 L10.5 6.5 L8.5 8.5 L4.5 4.5 Z" fill="#424242"/><path d="M4 7 L6.5 9.5" stroke="#424242" stroke-width="0.9"/></svg>
<svg style="left:300px;top:871px" width="8" height="5" viewBox="0 0 8 5"><path d="M0 0 H8 L4 4.5 Z" fill="#1E1E1E"/></svg>
<svg style="left:338px;top:868px" width="5" height="9" viewBox="0 0 5 9"><path d="M5 0 V9 L0 4.5 Z" fill="#C2C3C9"/></svg>
<svg style="left:1252px;top:868px" width="5" height="9" viewBox="0 0 5 9"><path d="M0 0 V9 L5 4.5 Z" fill="#C2C3C9"/></svg>
<div class="a" style="left:0px;top:0px;width:1288px;height:1px;background:#000;"></div>
<div class="a" style="left:0px;top:0px;width:1px;height:882px;background:#000;"></div>
<div class="a" style="left:1286px;top:114px;width:1px;height:768px;background:#5D6B99;"></div>
<div class="a" style="left:1px;top:1px;width:1286px;height:1px;background:#DCE3FC;"></div>
<div class="a" style="left:1px;top:1px;width:1px;height:113px;background:#DCE3FC;"></div>
<div class="a" style="left:1286px;top:1px;width:1px;height:113px;background:#DCE3FC;"></div>
<div class="a" style="left:1287px;top:0px;width:1px;height:882px;background:#000;"></div>
<div class="a" style="left:27px;top:880px;width:1259px;height:1px;background:#F5F5FA;"></div>
<div class="a" style="left:0px;top:881px;width:1288px;height:1px;background:#000;"></div>
</body></html>
